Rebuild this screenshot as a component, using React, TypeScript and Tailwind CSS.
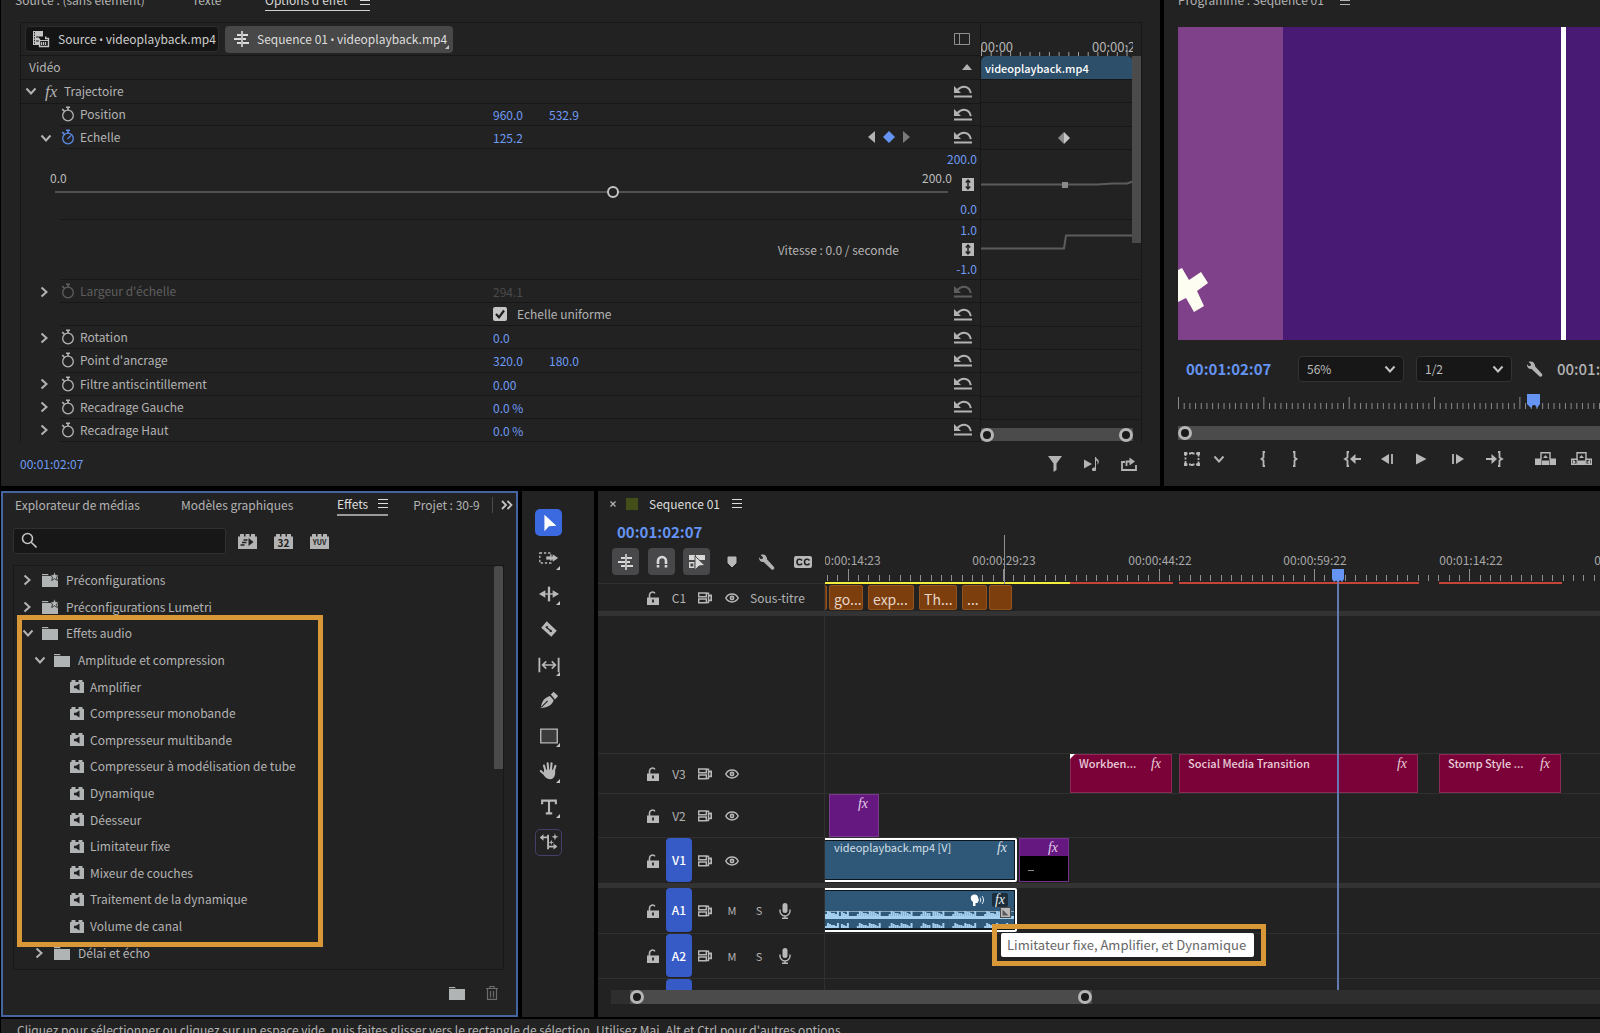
import type { ReactNode } from 'react';
import clsx from 'clsx';

const CHROME = 'text-[#b3b3b3]';

/* ---------- Icons ---------- */

interface IconProps {
  className?: string;
}

function ChevronDown({ className }: IconProps) {
  return (
    <svg viewBox="0 0 12 12" className={clsx('size-3 shrink-0', className)} fill="none" stroke="currentColor" strokeWidth="2">
      <path d="M1.5 3.5 6 8.5l4.5-5" />
    </svg>
  );
}

function ChevronRight({ className }: IconProps) {
  return (
    <svg viewBox="0 0 12 12" className={clsx('size-3 shrink-0', className)} fill="none" stroke="currentColor" strokeWidth="2">
      <path d="M3.5 1.5 8.5 6l-5 4.5" />
    </svg>
  );
}

function MenuLines({ className }: IconProps) {
  return (
    <svg viewBox="0 0 10 9" className={clsx('h-[9px] w-2.5 shrink-0', className)} stroke="currentColor" strokeWidth="1">
      <path d="M0 .5h10M0 4.5h10M0 8.5h10" />
    </svg>
  );
}

function Stopwatch({ active, className }: IconProps & { active?: boolean }) {
  return (
    <svg
      viewBox="0 0 14 16"
      className={clsx('h-4 w-3.5 shrink-0', active && 'text-[#5b8ae8]', className)}
      fill="none"
      stroke="currentColor"
      strokeWidth="1.3"
    >
      <circle cx="7" cy="9.5" r="5.3" />
      <path d="M5 1.2h4M7 1v3M1.2 3.2l2.2 2" strokeWidth="1.6" />
      {active && <path d="M6.5 10 10 6.5" />}
    </svg>
  );
}

function ResetIcon({ className }: IconProps) {
  return (
    <svg viewBox="0 0 18 13" className={clsx('h-[13px] w-[18px] shrink-0', className)}>
      <path d="M0 1v7h7z" fill="currentColor" />
      <path d="M3.5 5C8 0 15.5.8 16.8 8.2" fill="none" stroke="currentColor" strokeWidth="2" />
      <path d="M0 11.5h18" stroke="currentColor" strokeWidth="2" />
    </svg>
  );
}

function ExpandIcon() {
  return (
    <svg viewBox="0 0 12 13" className="h-[13px] w-3">
      <rect width="12" height="13" fill="#b8b8b8" />
      <path d="M6 2v9M3.8 4.4 6 2l2.2 2.4M3.8 8.6 6 11l2.2-2.4" fill="none" stroke="#222" strokeWidth="1.5" />
    </svg>
  );
}

function SourceIcon() {
  return (
    <svg viewBox="0 0 18 18" className="size-[18px] shrink-0" fill="none" stroke="#c4c4c4">
      <path d="M1 1h10v5.5H7V15H1z" fill="#c4c4c4" stroke="none" />
      <path d="M2.5 2v12" stroke="#1a1a1a" strokeWidth="1" strokeDasharray="1.3 1.3" />
      <path d="M4 7h3M4 11h3" stroke="#1a1a1a" />
      <path d="M7.5 8.5v8h9v-8h-2.8v-2" strokeWidth="1.4" />
      <path d="M7 10.5h10M9.5 12v3M11.5 12v3M13.5 12v3" strokeWidth="1.2" />
    </svg>
  );
}

function NestIcon({ className }: IconProps) {
  return (
    <svg viewBox="0 0 18 16" className={clsx('h-4 w-[18px] shrink-0', className)} stroke="currentColor" fill="none" strokeWidth="2">
      <path d="M9 0v16" strokeWidth="1.6" />
      <path d="M4 4h4M1 8h7M4 12h4M10 4h5M10 8h3M10 12h6" />
    </svg>
  );
}

function Wrench({ className }: IconProps) {
  return (
    <svg viewBox="0 0 16 16" className={clsx('size-4 shrink-0', className)} fill="currentColor">
      <path d="M1.6.9 4 3.2l-.4 1.6-1.7.5L0 3.3C-.3 6 1.8 8.4 4.6 8l8 7.4c1.7 1 3.4-.8 2.4-2.4L8 5.2C8.4 2.3 5.3-.7 1.6.9z" />
    </svg>
  );
}

function FolderIcon({ starred }: { starred?: boolean }) {
  return (
    <svg viewBox="0 0 17 14" className="h-3.5 w-[17px] shrink-0 overflow-visible" fill="#b0b4b4">
      <path d="M0 1h6l1 2h9v11H0z" />
      <path d="M0 2.5h7" stroke="#222" strokeWidth=".8" />
      {starred && (
        <path d="m12.5-1.5 1.2 3.2 3.3.2-2.5 2.2.9 3.5-2.9-1.900-2.8 1.900.8-3.500L8 1.900l3.300-.2z" stroke="#222" strokeWidth=".8" />
      )}
    </svg>
  );
}

function AudioEffectIcon() {
  return (
    <svg viewBox="0 0 14 13" className="h-[13px] w-3.5 shrink-0">
      <path d="M0 2h1.5V0h4v2h3V0h4v2H14v11H0z" fill="#b0b4b4" />
      <path d="M9.5 3.5v7L6 8.3H4V5.7h2z" fill="#222" />
    </svg>
  );
}

function Brick({ children }: { children: ReactNode }) {
  return (
    <svg viewBox="0 0 19 15" className="h-[15px] w-[19px]">
      <path d="M0 2.5h2V0h4v2.5h1.5V0h4v2.5H13V0h4v2.5h2V15H0z" fill="#b3b3b3" />
      {children}
    </svg>
  );
}

function LockIcon() {
  return (
    <svg viewBox="0 0 12 14" className="h-3.5 w-3 shrink-0">
      <path d="M2.5 7V4a3 3 0 0 1 5.500-1.600" fill="none" stroke="#b8b8b8" strokeWidth="1.6" />
      <path d="M0 6.5h12V14H0z" fill="#b8b8b8" />
      <path d="M6 8.5v3" stroke="#222" strokeWidth="1.8" />
    </svg>
  );
}

function SyncIcon() {
  return (
    <svg viewBox="0 0 14 12" className="h-3 w-3.5 shrink-0" fill="none" stroke="#b8b8b8" strokeWidth="1.4">
      <path d="M.7 1h7.600v3.700H.7zM.7 7h7.600v3.700H.7zM8.500 1.200h2v9.300h-2" />
      <path d="M10.5 3.5h2.800v4.800h-2.800" strokeWidth="1.8" />
    </svg>
  );
}

function EyeIcon() {
  return (
    <svg viewBox="0 0 14 10" className="h-2.5 w-3.5 shrink-0">
      <path d="M.8 5C3.5-.2 10.5-.2 13.2 5 10.5 10.2 3.5 10.2.8 5z" fill="none" stroke="#b8b8b8" strokeWidth="1.5" />
      <circle cx="7" cy="5" r="2.4" fill="#b8b8b8" />
      <circle cx="7" cy="5" r=".8" fill="#222" />
    </svg>
  );
}

function MicIcon() {
  return (
    <svg viewBox="0 0 12 16" className="h-4 w-3 shrink-0" fill="none" stroke="#b8b8b8" strokeWidth="1.4">
      <rect x="3.5" y="0" width="5" height="10" rx="2.5" fill="#b8b8b8" stroke="none" />
      <path d="M1 6.5V8a5 5 0 0 0 10 0V6.500M6 13v2.500M3 15.300h6" />
    </svg>
  );
}

function CornerMark({ className }: IconProps) {
  return (
    <svg viewBox="0 0 4 4" className={clsx('absolute size-1', className)}>
      <path d="M4 0v4H0z" fill="#c4c4c4" />
    </svg>
  );
}

function Fx({ className }: IconProps) {
  return <i className={clsx('font-["Liberation_Serif",serif] leading-none', className)}>fx</i>;
}

function Bullet() {
  return <span className='font-["Noto_Sans",sans-serif] text-[10px]'> • </span>;
}

function ScrollKnob({ className }: IconProps) {
  return <span className={clsx('size-3.5 shrink-0 rounded-full border-3 border-[#b5b5b5] bg-[#1a1a1a]', className)} />;
}

/* ---------- Effect options ---------- */

interface PropertyRowProps {
  label?: string;
  values?: string[];
  expandable?: boolean;
  open?: boolean;
  keyed?: boolean;
  disabled?: boolean;
  children?: ReactNode;
}

function PropertyRow({ label, values = [], expandable, open, keyed, disabled, children }: PropertyRowProps) {
  return (
    <div className="flex min-h-0 flex-1 items-stretch">
      <div className="flex w-[39px] items-center pl-[17px]">
        {expandable && (open ? <ChevronDown className="ml-0.5" /> : <ChevronRight />)}
      </div>
      <div className={clsx('flex flex-1 items-center border-b border-[#171717] pl-px pr-2', disabled && 'text-[#5e5e5e]')}>
        <div className="flex w-[432px] shrink-0 items-center gap-[5px]">
          {label && (
            <>
              <Stopwatch active={keyed} />
              <span>{label}</span>
            </>
          )}
        </div>
        {children}
        {values.map((value) => (
          <button key={value} className={clsx('mt-0.5 w-14 text-left', disabled ? 'text-[#4a4a4a]' : 'text-[#6f9bf5]')}>
            {value}
          </button>
        ))}
        <div className="ml-auto flex items-center">
          {keyed && (
            <div className="mr-11 flex items-center gap-2">
              <button aria-label="Image clé précédente">
                <svg viewBox="0 0 7 12" className="h-3 w-[7px]">
                  <path d="M7 0v12L0 6z" fill="#b3b3b3" />
                </svg>
              </button>
              <button aria-label="Image clé">
                <svg viewBox="0 0 12 12" className="size-3">
                  <path d="m6 0 6 6-6 6-6-6z" fill="#6594f2" />
                </svg>
              </button>
              <button aria-label="Image clé suivante">
                <svg viewBox="0 0 7 12" className="h-3 w-[7px]">
                  <path d="M0 0v12l7-6z" fill="#7a7a7a" />
                </svg>
              </button>
            </div>
          )}
          <button aria-label="Réinitialiser">
            <ResetIcon />
          </button>
        </div>
      </div>
    </div>
  );
}

function KeyframeArea() {
  const lines = [79, 102, 126, 149, 219, 279, 302, 326, 349, 372, 396, 419];
  const ticks = Array.from({ length: 16 }, (_, i) => i);

  return (
    <div className="relative flex w-[162px] shrink-0 flex-col border-x border-[#171717]">
      <div className="relative h-[33px] w-[152px] overflow-hidden text-[13px] leading-4">
        <span className="absolute -left-1 top-4">:00:00</span>
        <span className="absolute left-[111px] top-4 whitespace-nowrap">00:00:29</span>
        <svg className="absolute bottom-0 h-2.5 w-full" stroke="#a0a0a0">
          {ticks.map((i) => (
            <path key={i} d={`M${i * 9.7 + 0.5} ${i % 15 === 0 ? 0 : 6}V10`} />
          ))}
        </svg>
      </div>
      <div className="flex h-[23px] w-[152px] items-center rounded-t-md bg-[#2d4f6a] pl-1 text-[11px] font-medium text-white">
        videoplayback.mp4
      </div>
      <svg className="w-full flex-1" fill="none">
        {lines.map((y) => (
          <path key={y} d={`M0 ${y - 78.5}h158`} stroke="#171717" />
        ))}
        <path d="M0 105.5h116l16-1h14l6-2" stroke="#5c5c5c" strokeWidth="2" />
        <rect x="81" y="103" width="6" height="6" fill="#8a8a8a" />
        <path d="M0 169.5h83l2-13h67" stroke="#5c5c5c" strokeWidth="2" />
        <path d="m83 53-6 6 6 6z" fill="#8a8a8a" />
        <path d="m83 53 6 6-6 6z" fill="#c4c4c4" />
      </svg>
      <div className="absolute right-0 top-[33px] h-[187px] w-[9px] bg-[#4b4b4b]" />
      <div className="mb-px flex h-[13px] w-[152px] items-center justify-between bg-[#4b4b4b]">
        <ScrollKnob className="-ml-px" />
        <ScrollKnob />
      </div>
    </div>
  );
}

function EffectOptions() {
  return (
    <section className={clsx('flex min-w-0 flex-1 flex-col bg-[#222222] pl-[19px] text-xs leading-5', CHROME)}>
      <div className="-ml-[5px] -mt-2.5 flex h-8 items-start whitespace-nowrap">
        <button className="w-[177px] text-left">Source : (sans élément)</button>
        <button className="w-[73px] text-left">Texte</button>
        <button className="flex items-center gap-3 border-b border-[#d0d0d0] text-[#d8d8d8]">
          Options d'effet
          <MenuLines />
        </button>
      </div>

      <div className="mr-[18px] flex h-[420px] border-l border-t border-[#171717]">
        <div className="flex min-w-0 flex-1 flex-col">
          {/* Clip switcher */}
          <div className="flex h-[33px] shrink-0 items-center gap-1.5 whitespace-nowrap border-b border-[#171717] pl-1 pr-2.5 text-[#cccccc]">
            <button className="flex h-[26px] w-[194px] items-center gap-2 rounded border border-[#2e2e2e] bg-[#141414] pl-1.5">
              <SourceIcon />
              <span>
                Source
                <Bullet />
                videoplayback.mp4
              </span>
            </button>
            <button className="relative flex h-[27px] w-[228px] items-center gap-1.5 rounded bg-[#484848] pl-2 text-[#dddddd]">
              <NestIcon />
              <span>
                Sequence 01
                <Bullet />
                videoplayback.mp4
              </span>
              <CornerMark className="bottom-1 right-1" />
            </button>
            <button className="ml-auto" aria-label="Afficher le montage">
              <svg viewBox="0 0 16 12" className="h-3 w-4" fill="none" stroke="#8f8f8f">
                <path d="M.5.5h15v11H.5zM5.500.5v11" />
              </svg>
            </button>
          </div>

          <div className="flex h-[93px] shrink-0 flex-col">
            <div className="flex flex-1 items-center justify-between border-b border-[#171717] pl-2 pr-2">
              <span>Vidéo</span>
              <svg viewBox="0 0 10 6" className="h-1.5 w-2.5">
                <path d="M0 6 5 0l5 6z" fill="#b3b3b3" />
              </svg>
            </div>
            <div className="flex flex-1 items-center border-b border-[#171717] pl-1 pr-2">
              <ChevronDown />
              <Fx className="ml-2 w-4 text-[17px]" />
              <span className="ml-[3px]">Trajectoire</span>
              <button className="ml-auto" aria-label="Réinitialiser">
                <ResetIcon />
              </button>
            </div>
            <PropertyRow label="Position" values={['960.0', '532.9']} />
            <PropertyRow label="Echelle" values={['125.2']} expandable open keyed />
          </div>

          {/* Scale slider */}
          <div className="flex h-[70px] shrink-0">
            <div className="ml-[29px] mt-[19px] min-w-0 flex-1">
              <div className="flex justify-between text-[#bdbdbd]">
                <span>0.0</span>
                <span>200.0</span>
              </div>
              <input
                type="range"
                aria-label="Echelle"
                min="0"
                max="200"
                step="0.1"
                defaultValue="125.2"
                className="-mt-0.5 block h-3 w-full appearance-none bg-transparent bg-[linear-gradient(#505050,#505050)] bg-[length:99%_2px] bg-center bg-no-repeat [&::-webkit-slider-thumb]:size-3 [&::-webkit-slider-thumb]:appearance-none [&::-webkit-slider-thumb]:rounded-full [&::-webkit-slider-thumb]:border-2 [&::-webkit-slider-thumb]:border-[#c4c4c4] [&::-webkit-slider-thumb]:bg-[#222222]"
              />
            </div>
            <div className="flex w-7 flex-col items-end justify-between whitespace-nowrap pr-[3px] text-[#6f9bf5]">
              <span>200.0</span>
              <button className="mr-[3px]" aria-label="Ajuster l'échelle">
                <ExpandIcon />
              </button>
              <span>0.0</span>
            </div>
          </div>
          <div className="ml-[39px] h-px shrink-0 bg-[#171717]" />
          <div className="flex h-[59px] shrink-0 items-center justify-end">
            <span className="mr-[53px]">Vitesse : 0.0 / seconde</span>
            <div className="flex h-full w-7 flex-col items-end justify-between whitespace-nowrap pr-[3px] text-[#6f9bf5]">
              <span>1.0</span>
              <button className="mr-[3px]" aria-label="Ajuster la vitesse">
                <ExpandIcon />
              </button>
              <span>-1.0</span>
            </div>
          </div>
          <div className="ml-[39px] h-px shrink-0 bg-[#171717]" />

          <div className="flex min-h-0 flex-1 flex-col">
            <PropertyRow label="Largeur d'échelle" values={['294.1']} expandable disabled />
            <PropertyRow>
              <label className="flex items-center gap-2.5">
                <span className="grid size-3.5 place-items-center *:col-start-1 *:row-start-1">
                  <input type="checkbox" defaultChecked className="size-3.5 appearance-none rounded-xs bg-[#c4c4c4]" />
                  <svg viewBox="0 0 12 12" className="pointer-events-none size-3" fill="none" stroke="#1c1c1c" strokeWidth="2.2">
                    <path d="m2 6 3 3.300L10 2.500" />
                  </svg>
                </span>
                Echelle uniforme
              </label>
            </PropertyRow>
            <PropertyRow label="Rotation" values={['0.0']} expandable />
            <PropertyRow label="Point d'ancrage" values={['320.0', '180.0']} />
            <PropertyRow label="Filtre antiscintillement" values={['0.00']} expandable />
            <PropertyRow label="Recadrage Gauche" values={['0.0 %']} expandable />
            <PropertyRow label="Recadrage Haut" values={['0.0 %']} expandable />
          </div>
        </div>
        <KeyframeArea />
      </div>

      <div className="flex flex-1 items-center pr-[23px]">
        <span className="text-[#6f9bf5]">00:01:02:07</span>
        <div className="ml-auto flex items-center gap-5">
          <button aria-label="Filtrer">
            <svg viewBox="0 0 16 16" className="size-4" fill="#b3b3b3">
              <path d="M1 0h14L9.500 7.500V14L6.500 16V7.500z" />
            </svg>
          </button>
          <button aria-label="Lire l'audio">
            <svg viewBox="0 0 18 14" className="h-3.5 w-[18px]" fill="#b3b3b3">
              <path d="M1 2.500 9 7l-8 4.500zM10.500 10.500a2 2 0 1 0 2.500 2V3.500c2 .5 2 2.500 1 4.500 2.500-2 2.500-5-.5-6.500L13 0h-1v10.500z" />
            </svg>
          </button>
          <button aria-label="Exporter">
            <svg viewBox="0 0 16 14" className="h-3.5 w-4" fill="none" stroke="#b3b3b3" strokeWidth="1.8">
              <path d="M4 5H1v8h14V8M5.500 9V4.500H10" />
              <path d="M8.500.5 14 4.500l-5.500 4z" fill="#b3b3b3" stroke="none" />
            </svg>
          </button>
        </div>
      </div>
    </section>
  );
}

/* ---------- Program monitor ---------- */

function ProgramSelect({ label, options, className }: { label: string; options: string[]; className: string }) {
  return (
    <div className={clsx('relative shrink-0', className)}>
      <select
        aria-label={label}
        className="h-[26px] w-full appearance-none rounded border border-[#333333] bg-[#171717] pl-2 text-xs text-[#bdbdbd]"
      >
        {options.map((option) => (
          <option key={option}>{option}</option>
        ))}
      </select>
      <ChevronDown className="pointer-events-none absolute right-2 top-[7px] text-[#c4c4c4]" />
    </div>
  );
}

function TransportButton({ label, className, children }: { label: string; className?: string; children: ReactNode }) {
  return (
    <button aria-label={label} className={clsx('shrink-0', className)}>
      <svg viewBox="0 0 22 16" className="h-4 w-[22px]" fill="none" stroke="#b8b8b8" strokeWidth="1.8">
        {children}
      </svg>
    </button>
  );
}

function ProgramMonitor() {
  const ticks = Array.from({ length: 76 }, (_, i) => i);

  return (
    <section className={clsx('flex w-[436px] shrink-0 flex-col overflow-hidden bg-[#222222] pl-3.5 text-xs leading-5', CHROME)}>
      <div className="-mt-2.5 flex h-[37px] shrink-0 items-start">
        <button className="flex items-center gap-4">
          Programme : Sequence 01
          <MenuLines />
        </button>
      </div>

      <svg viewBox="0 0 422 313" className="h-[313px] w-full shrink-0" preserveAspectRatio="xMinYMin slice">
        <rect width="422" height="313" fill="#481a73" />
        <rect width="105" height="313" fill="#7f4189" />
        <rect x="383" width="5" height="313" fill="#ffffff" />
        <path d="m0 243 4-2 7 12 12-8 7 11-11 8 7 15-10 6-8-14-8 4z" fill="#fdfdf2" />
      </svg>

      <div className="flex h-[57px] shrink-0 items-center whitespace-nowrap pl-2">
        <span className="w-28 shrink-0 text-[15px] font-bold text-[#6594f2]">00:01:02:07</span>
        <ProgramSelect label="Zoom" options={['56%', '100%']} className="w-[106px]" />
        <ProgramSelect label="Résolution de lecture" options={['1/2', '1/4']} className="ml-3 w-24" />
        <button className="ml-[15px]" aria-label="Réglages">
          <Wrench />
        </button>
        <span className="ml-3.5 text-[15px] font-medium">00:01:</span>
      </div>

      <svg className="h-[18px] w-full shrink-0 overflow-visible" stroke="#8a8a8a">
        {ticks.map((i) => (
          <path key={i} d={`M${i * 5.69 + 0.5} ${i % 15 === 0 ? 0 : 6}V12`} />
        ))}
        <path d="M349-3h13V7l-3 4-2-3h-2l-2 3-4-4z" fill="#6594f2" stroke="none" />
      </svg>
      <div className="mt-[11px] flex h-3.5 shrink-0 items-center bg-[#4b4b4b]">
        <ScrollKnob />
      </div>

      <div className="flex flex-1 items-center pb-2">
        <TransportButton label="Recadrer" className="ml-[3px]">
          <path d="M4.500 2.500h13v11h-13z" strokeDasharray="2 1.500" />
          <path d="M3 1h3v3H3zM16 1h3v3h-3zM3 12h3v3H3zM16 12h3v3h-3zM10 1h2v2h-2zM10 13h2v2h-2z" fill="#b8b8b8" stroke="none" />
        </TransportButton>
        <button className="ml-2.5" aria-label="Plus d'options">
          <ChevronDown />
        </button>
        <TransportButton label="Point d'entrée" className="ml-[27px]">
          <path d="M13 1h-1.500v5.500L9.500 8l2 1.500V15H13" />
        </TransportButton>
        <TransportButton label="Point de sortie" className="ml-2.5">
          <path d="M9 1h1.500v5.500l2 1.500-2 1.500V15H9" />
        </TransportButton>
        <TransportButton label="Aller au point d'entrée" className="ml-9">
          <path d="M7 1H5.500v5.500L3 8l2.500 1.500V15H7M10 8h9" />
          <path d="M13.500 3v10L8 8z" fill="#b8b8b8" stroke="none" />
        </TransportButton>
        <TransportButton label="Image précédente" className="ml-3">
          <path d="M13 3v10L5 8z" fill="#b8b8b8" stroke="none" />
          <path d="M16 3v10" />
        </TransportButton>
        <TransportButton label="Lecture" className="ml-3">
          <path d="M6 2.500v11L16.500 8z" fill="#b8b8b8" stroke="none" />
        </TransportButton>
        <TransportButton label="Image suivante" className="ml-[15px]">
          <path d="M9 3v10l8-5z" fill="#b8b8b8" stroke="none" />
          <path d="M6 3v10" />
        </TransportButton>
        <TransportButton label="Aller au point de sortie" className="ml-3.5">
          <path d="M15 1h1.500v5.500L19 8l-2.500 1.500V15H15M3 8h8" />
          <path d="M8.500 3v10L14 8z" fill="#b8b8b8" stroke="none" />
        </TransportButton>
        <TransportButton label="Prélever" className="ml-[30px]">
          <path d="M0 7.500h6.500V14H0zM14.500 7.500H21V14h-6.500zM7 9.500h7V14H7z" fill="#b8b8b8" stroke="none" />
          <path d="M6 8V1.700h9V8" strokeWidth="1.400" />
          <path d="m10.500 4 2.500 3H8z" fill="#b8b8b8" stroke="none" />
        </TransportButton>
        <TransportButton label="Extraire" className="ml-3.5">
          <path d="M.7 8.200h5.500v5.100H.7zM14.800 8.200h5.500v5.100h-5.500z" strokeWidth="1.400" />
          <path d="M7 9.500h7V14H7zM2 8.500l3 2.500-3 2.500zM19 8.500 16 11l3 2.500z" fill="#b8b8b8" stroke="none" />
          <path d="M6 8V1.700h9V8" strokeWidth="1.400" />
          <path d="m10.500 4 2.500 3H8z" fill="#b8b8b8" stroke="none" />
        </TransportButton>
      </div>
    </section>
  );
}

/* ---------- Effects browser ---------- */

const audioEffects = [
  'Amplifier',
  'Compresseur monobande',
  'Compresseur multibande',
  'Compresseur à modélisation de tube',
  'Dynamique',
  'Déesseur',
  'Limitateur fixe',
  'Mixeur de couches',
  'Traitement de la dynamique',
  'Volume de canal',
];

interface FolderRowProps {
  label: string;
  nested?: boolean;
  open?: boolean;
  starred?: boolean;
}

function FolderRow({ label, nested, open, starred }: FolderRowProps) {
  return (
    <li className={clsx('flex flex-1 items-center', nested ? 'pl-[19px]' : 'pl-[7px]')}>
      {open ? <ChevronDown className="ml-px" /> : <ChevronRight />}
      <span className={clsx('mr-[7px]', open ? 'ml-2' : 'ml-[9px]')}>
        <FolderIcon starred={starred} />
      </span>
      {label}
    </li>
  );
}

function EffectsPanel() {
  return (
    <section className={clsx('flex w-[517px] shrink-0 flex-col border-2 border-[#45659f] bg-[#222222] text-xs leading-5', CHROME)}>
      <div className="flex h-[23px] items-center whitespace-nowrap pl-3">
        <button className="w-[166px] text-left">Explorateur de médias</button>
        <button className="w-[156px] text-left">Modèles graphiques</button>
        <button className="flex h-[23px] items-center gap-2.5 border-b-2 border-[#9a9a9a] text-[#dddddd]">
          Effets
          <MenuLines />
        </button>
        <button className="ml-[25px]">Projet : 30-9</button>
        <div className="ml-3 mr-2 h-4 w-px bg-[#4b4b4b]" />
        <button aria-label="Plus de panneaux">
          <svg viewBox="0 0 12 10" className="h-2.5 w-3" fill="none" stroke="#c4c4c4" strokeWidth="1.8">
            <path d="m1 1 4 4-4 4M6.500 1l4 4-4 4" />
          </svg>
        </button>
      </div>

      <div className="mt-3 flex items-center pl-2.5">
        <label className="relative">
          <svg viewBox="0 0 16 16" className="absolute left-2 top-1 size-4" fill="none" stroke="#c4c4c4" strokeWidth="1.6">
            <circle cx="6.5" cy="6.5" r="5" />
            <path d="m10.200 10.200 5.300 5.300" />
          </svg>
          <input
            type="search"
            aria-label="Rechercher un effet"
            className="block h-[26px] w-[213px] rounded-xs border border-[#303030] bg-[#171717] pl-7 pr-2 outline-none"
          />
        </label>
        <div className="ml-3 flex gap-[17px]">
          <button aria-label="Effets accélérés">
            <Brick>
              <path d="M10.500 4v8l5-4z" fill="#222" />
              <path d="M5.500 6h4M4 8.500h4.500M2.500 11h4" stroke="#222" strokeWidth="1.3" />
            </Brick>
          </button>
          <button aria-label="Effets 32 bits">
            <Brick>
              <text x="9.5" y="12.5" textAnchor="middle" fontSize="10" fontWeight="700" fill="#222">
                32
              </text>
            </Brick>
          </button>
          <button aria-label="Effets YUV">
            <Brick>
              <text x="9.5" y="11" textAnchor="middle" fontSize="7" fontWeight="700" fill="#222">
                YUV
              </text>
            </Brick>
          </button>
        </div>
      </div>

      <div className="relative ml-2.5 mr-3 mt-[11px] flex h-[405px] flex-col border border-[#181818]">
        <ul className="flex h-[400px] flex-col pt-px">
          <FolderRow label="Préconfigurations" starred />
          <FolderRow label="Préconfigurations Lumetri" starred />
          <FolderRow label="Effets audio" open />
          <FolderRow label="Amplitude et compression" open nested />
          {audioEffects.map((effect) => (
            <li key={effect} className="flex flex-1 items-center gap-1.5 pl-14">
              <AudioEffectIcon />
              {effect}
            </li>
          ))}
          <FolderRow label="Délai et écho" nested />
        </ul>
        <div className="absolute right-0 top-0 h-[203px] w-[9px] rounded-t-xs bg-[#4b4b4b]" />
        {/* Highlight around the audio effects */}
        <div className="pointer-events-none absolute left-[3px] top-[49px] h-[332px] w-[306px] border-5 border-[#d99838]" />
      </div>

      <div className="flex flex-1 items-center justify-end gap-5 pr-[18px]">
        <button aria-label="Nouveau chutier">
          <FolderIcon />
        </button>
        <button aria-label="Supprimer">
          <svg viewBox="0 0 12 14" className="h-3.5 w-3" fill="none" stroke="#6b6b6b" strokeWidth="1.2">
            <path d="M0 2.500h12M4 2.500v-2h4v2M1.500 3v10.400h9V3M4.500 5v6.500M7.500 5v6.500" />
          </svg>
        </button>
      </div>
    </section>
  );
}

/* ---------- Tools ---------- */

interface Tool {
  name: string;
  icon: ReactNode;
  menu?: boolean;
}

const tools: Tool[] = [
  { name: 'Sélection', icon: <path d="M7 3v18l5-5.500 8-.5z" fill="#ffffff" stroke="none" /> },
  {
    name: 'Sélection de piste',
    menu: true,
    icon: (
      <>
        <path d="M2 6.500h12v11H2z" strokeDasharray="2.500 2" strokeWidth="1.500" />
        <path d="M9 12h8" strokeWidth="3.5" />
        <path d="M16 8v8l6-4z" fill="#b8b8b8" stroke="none" />
      </>
    ),
  },
  {
    name: 'Propagation',
    menu: true,
    icon: (
      <>
        <path d="M12 4v16" strokeWidth="2.5" />
        <path d="M4 12h16" strokeWidth="1.500" />
        <path d="M8 8v8l-7-4zM16 8v8l7-4z" fill="#b8b8b8" stroke="none" />
      </>
    ),
  },
  {
    name: 'Cutter',
    icon: (
      <>
        <path d="m9.500 3.500 11 10.500-6 6.500-11-10z" fill="#b8b8b8" stroke="none" />
        <path d="m8.500 9.500 6.500 5.500M10.500 9l-1.500 2M14.500 13l-1.500 2" stroke="#222" strokeWidth="1.500" />
      </>
    ),
  },
  {
    name: 'Déplacer dessous',
    menu: true,
    icon: (
      <>
        <path d="M1.500 4v16M22.500 4v16" strokeWidth="2" />
        <path d="M5 12h14M9 8l-4 4 4 4M15 8l4 4-4 4" strokeWidth="1.800" />
      </>
    ),
  },
  {
    name: 'Plume',
    icon: (
      <>
        <path d="M3 21C4 13 7 9.500 13 7.500l4 4.500C16 17 11 20 3 21zM14 6l3-3 5 4.500-3.500 4z" fill="#b8b8b8" stroke="none" />
        <path d="m3.500 20 7-7" stroke="#222" strokeWidth="1.200" />
      </>
    ),
  },
  { name: 'Rectangle', menu: true, icon: <path d="M3 4.500h18v15H3z" fill="#3c3c3c" strokeWidth="1.500" /> },
  {
    name: 'Main',
    menu: true,
    icon: (
      <>
        <path d="M6.500 11c3-1 9.500-1 12 0 1 4-.5 10-5 10-3 0-5-1-7-4z" fill="#b8b8b8" stroke="none" />
        <path d="M8.500 13 6.500 6M11.300 12l-.8-8.500M14 12l.8-8.500M16.800 13l2.200-6.500M8.500 17l-5.500-5" strokeWidth="2.300" strokeLinecap="round" />
      </>
    ),
  },
  { name: 'Texte', menu: true, icon: <path d="M4.500 9V5h15v4M12 5v14M8.500 19h7" strokeWidth="2.300" /> },
  {
    name: 'Remix',
    icon: (
      <>
        <path d="M11 4v16M3 7h8M11 17h9" strokeWidth="2" />
        <path d="M6 3.500 2 7l4 3.500zM17 13.500l4 3.500-4 3.500z" fill="#b8b8b8" stroke="none" />
        <path d="m18.500 2.500.9 3 3 .9-3 .9-.9 3-.9-3-3-.9 3-.9zM14.500 9.500l.7 2.300 2.300.7-2.300.7-.7 2.300-.7-2.300-2.300-.7 2.300-.7z" fill="#b8b8b8" stroke="none" />
      </>
    ),
  },
];

function ToolBar() {
  return (
    <nav className="w-[72px] shrink-0 bg-[#222222] pr-[19px] pt-[18px]">
      <div className="flex h-[347px] flex-col items-center justify-between">
        {tools.map((tool, index) => (
          <button
            key={tool.name}
            aria-label={tool.name}
            className={clsx(
              'relative grid h-[27px] w-[27px] place-items-center rounded-[5px]',
              index === 0 && 'bg-[#3b69e0]',
              index === tools.length - 1 && 'border border-[#463f6c]',
            )}
          >
            <svg viewBox="0 0 24 24" className="size-[22px]" fill="none" stroke="#b8b8b8">
              {tool.icon}
            </svg>
            {tool.menu && <CornerMark className="bottom-0.5 right-0.5" />}
          </button>
        ))}
      </div>
    </nav>
  );
}

/* ---------- Timeline ---------- */

const TICK = 10.36;

const captions = [
  { start: -4, width: 6, text: '' },
  { start: 4, width: 34, text: 'go...' },
  { start: 43, width: 46, text: 'exp...' },
  { start: 94, width: 38, text: 'Th...' },
  { start: 137, width: 25, text: '...' },
  { start: 164, width: 23, text: '' },
];

const titles = [
  { start: 245, width: 102, text: 'Workben...' },
  { start: 354, width: 239, text: 'Social Media Transition' },
  { start: 614, width: 122, text: 'Stomp Style ...' },
];

const renderBars = [
  { start: 0, width: 245, color: 'bg-[#f4ee3e]' },
  { start: 245, width: 103, color: 'bg-[#c4443a]' },
  { start: 354, width: 240, color: 'bg-[#c4443a]' },
  { start: 614, width: 123, color: 'bg-[#c4443a]' },
];

const rulerLabels = ['00:00:14:23', '00:00:29:23', '00:00:44:22', '00:00:59:22', '00:01:14:22', '00:01:29:21'];

function Ruler() {
  const ticks = Array.from({ length: 76 }, (_, i) => i);

  return (
    <div className="relative min-w-0 flex-1 overflow-hidden">
      {rulerLabels.map((label, i) => (
        <span
          key={label}
          className="absolute top-[34px] w-20 text-center text-xs leading-5 text-[#a8a8a8]"
          style={{ left: Math.round(i * 15 * TICK - 16) }}
        >
          {label}
        </span>
      ))}
      <svg className="absolute bottom-[3px] h-3 w-full" stroke="#8f8f8f">
        {ticks.map((i) => (
          <path key={i} d={`M${Math.round(i * TICK + 2) + 0.5} ${(i - 2) % 15 === 0 ? 0 : 6}V12`} />
        ))}
      </svg>
      {renderBars.map((bar) => (
        <div key={bar.start} className={clsx('absolute bottom-0 h-0.5', bar.color)} style={{ left: bar.start, width: bar.width }} />
      ))}
      <div className="absolute bottom-0 left-[179px] top-[19px] w-px bg-[#8f8f8f]" />
    </div>
  );
}

interface TrackProps {
  name: string;
  className: string;
  audio?: boolean;
  targeted?: boolean;
  title?: string;
  children?: ReactNode;
}

function Track({ name, className, audio, targeted, title, children }: TrackProps) {
  return (
    <div className={clsx('flex shrink-0', className)}>
      <div className="flex w-[227px] shrink-0 items-center border-r border-[#303030] pl-[46px] text-xs">
        <button className="grid w-[18px] place-items-center" aria-label="Verrouiller">
          <LockIcon />
        </button>
        <button
          className={clsx(
            'ml-1 w-[26px] self-stretch text-center',
            targeted && 'mb-px rounded bg-[#365bc6] font-medium text-white',
          )}
        >
          {name}
        </button>
        <button className="ml-1 grid w-[18px] place-items-center" aria-label="Synchroniser">
          <SyncIcon />
        </button>
        {audio ? (
          <>
            <button className="ml-[9px] w-[18px] text-center text-[11px]">M</button>
            <button className="ml-[9px] w-[18px] text-center text-[11px]">S</button>
            <button className="ml-2 grid w-[18px] place-items-center" aria-label="Voix off">
              <MicIcon />
            </button>
          </>
        ) : (
          <button className="ml-[9px] grid w-[18px] place-items-center" aria-label="Afficher la piste">
            <EyeIcon />
          </button>
        )}
        {title && <span className="ml-[9px]">{title}</span>}
      </div>
      <div className="relative min-w-0 flex-1 overflow-hidden">{children}</div>
    </div>
  );
}

function Waveform() {
  const bars = Array.from({ length: 95 }, (_, i) => {
    const gap = i % 16 > 11 || i % 23 === 7;
    return gap ? 0 : 2 + ((i * 7 + (i >> 2) * 5) % 4);
  });

  return (
    <svg viewBox="0 0 190 24" className="absolute bottom-0 left-0 h-6 w-[189px]" preserveAspectRatio="none">
      <path d="M0 5.500h190" stroke="#8ba6b9" strokeWidth="1" />
      <path d="M0 11.500h190" stroke="#a5cfef" strokeWidth="3" />
      {bars.map((h, i) => (
        <g key={i} fill="#a5cfef">
          <rect x={i * 2} y={10 - h} width="2" height={h} />
          <rect x={i * 2} y={22 - h} width="2" height={h} />
        </g>
      ))}
      <path d="M0 22.500h190" stroke="#10202c" />
    </svg>
  );
}

function Timeline() {
  return (
    <section className={clsx('relative flex min-w-0 flex-1 flex-col bg-[#222222]', CHROME)}>
      <div className="flex h-[25px] shrink-0 items-center pl-3 text-xs leading-5 text-[#dddddd]">
        <button aria-label="Fermer">
          <svg viewBox="0 0 6 6" className="size-1.5" stroke="#b8b8b8" strokeWidth="1.2">
            <path d="m.5.5 5 5M5.500.5l-5 5" />
          </svg>
        </button>
        <span className="ml-2.5 size-3 bg-[#434f18]" />
        <span className="ml-[11px]">Sequence 01</span>
        <MenuLines className="ml-3" />
      </div>

      <div className="flex h-[68px] shrink-0">
        <div className="flex w-[227px] shrink-0 flex-col border-b border-[#303030] pl-3.5">
          <span className="mt-1.5 pl-[5px] text-[15px] font-bold leading-5 text-[#6594f2]">00:01:02:07</span>
          <div className="mt-1.5 flex items-center">
            <button className="grid size-[27px] place-items-center rounded bg-[#48484a]" aria-label="Imbriquer">
              <NestIcon className="text-[#d8d8d8]" />
            </button>
            <button className="ml-[9px] grid size-[27px] place-items-center rounded bg-[#48484a]" aria-label="Magnétisme">
              <svg viewBox="0 0 12 13" className="h-[13px] w-3" fill="none" stroke="#d8d8d8" strokeWidth="2.6">
                <path d="M2 12.500V6a4 4 0 0 1 8 0v6.500" />
                <path d="M0 9.500h4M8 9.500h4" stroke="#48484a" strokeWidth="1" />
              </svg>
            </button>
            <button className="ml-2 grid size-[27px] place-items-center rounded bg-[#48484a]" aria-label="Sélection liée">
              <svg viewBox="0 0 18 16" className="h-4 w-[18px]" fill="#d8d8d8">
                <path d="M1 1h6v5H1zM8 1h9v5H8z" />
                <path d="M1.700 8.700H6v4.600H1.700z" fill="none" stroke="#d8d8d8" strokeWidth="1.400" />
                <path d="M7 2v14l4-4 6-.5z" stroke="#48484a" />
              </svg>
            </button>
            <button className="ml-[17px]" aria-label="Marqueur">
              <svg viewBox="0 0 10 12" className="h-3 w-2.5">
                <path d="M1 1h8v6l-4 4-4-4z" fill="#b8b8b8" stroke="#b8b8b8" strokeLinejoin="round" />
              </svg>
            </button>
            <button className="ml-[22px]" aria-label="Réglages de la timeline">
              <Wrench />
            </button>
            <button className="ml-[19px]" aria-label="Sous-titres">
              <svg viewBox="0 0 18 12" className="h-3 w-[18px]">
                <rect width="18" height="12" rx="2" fill="#b8b8b8" />
                <path d="M8 4.500C7 2.800 3 2.500 3 6s4 3.200 5 1.500M15.500 4.500c-1-1.700-5-2-5 1.500s4 3.200 5 1.500" fill="none" stroke="#222" strokeWidth="1.600" />
              </svg>
            </button>
          </div>
        </div>
        <Ruler />
      </div>

      {/* Subtitle track */}
      <Track name="C1" title="Sous-titre" className="h-[27px]">
        {captions.map((caption) => (
          <div
            key={caption.start}
            className="absolute inset-y-0 my-px overflow-hidden rounded-xs border border-[#93531f] bg-[#7d3e0e] pl-1 text-sm leading-[26px] text-[#e6d6c8]"
            style={{ left: caption.start, width: caption.width }}
          >
            {caption.text}
          </div>
        ))}
      </Track>
      <div className="h-[5px] shrink-0 bg-[#333333]" />
      <div className="min-h-0 w-[227px] flex-1 border-r border-[#303030]" />

      <Track name="V3" className="h-10 border-t border-[#303030]">
        {titles.map((clip, i) => (
          <div
            key={clip.start}
            className="absolute inset-y-0 flex items-start justify-between border border-[#8c2a57] bg-[#7a0238] pl-2 pr-2.5 text-[11px] leading-4 text-[#e8ccd8]"
            style={{ left: clip.start, width: clip.width }}
          >
            <span className="font-medium">{clip.text}</span>
            <Fx className="mt-0.5 text-sm" />
            {i === 0 && (
              <svg viewBox="0 0 5 5" className="absolute -left-px -top-px size-[5px]">
                <path d="M0 0h5L0 5z" fill="#ffffff" />
              </svg>
            )}
          </div>
        ))}
      </Track>
      <Track name="V2" className="h-11 border-t border-[#303030]">
        <div className="absolute inset-y-0 left-1 flex w-[50px] items-start justify-end border border-[#7a3a90] bg-[#65187f] pr-2.5 text-[#e3cdea]">
          <Fx className="mt-0.5 text-sm" />
        </div>
      </Track>
      <Track name="V1" targeted className="h-[46px] border-t border-[#303030]">
        <div className="absolute -left-1 bottom-px top-0 flex w-[196px] items-start justify-between rounded-xs border-2 border-white bg-[#2f5777] pl-[11px] pr-2 text-[11px] leading-[14px] text-[#d5e0e8] inset-ring inset-ring-[#0c151c]">
          <span>videoplayback.mp4 [V]</span>
          <Fx className="mt-px text-sm" />
        </div>
        <div className="absolute bottom-px left-[194px] top-0 flex w-[50px] flex-col border border-[#74308c] bg-[#65187f] text-[#e3cdea]">
          <div className="flex h-[17px] items-center justify-end pr-2.5">
            <Fx className="text-sm" />
          </div>
          <div className="flex-1 bg-black pl-2 pt-3.5">
            <div className="h-px w-1.5 bg-[#8a8a8a]" />
          </div>
        </div>
      </Track>
      <div className="h-[5px] shrink-0 bg-[#333333]" />
      <Track name="A1" audio targeted className="h-[45px]">
        <div className="absolute -left-1 bottom-px top-0 w-[196px] rounded-xs border-2 border-white bg-[#2f5777] inset-ring inset-ring-[#0c151c]">
          <div className="absolute inset-y-0 left-0.5 right-0">
            <Waveform />
          </div>
          <svg viewBox="0 0 14 12" className="absolute right-[31px] top-1 h-3 w-3.5" fill="none" stroke="#e6eef4">
            <path d="M1 2.500C3-.5 8 0 8 3.500L9 6 7.500 9H5.500v3H3V8C.5 6.500.5 4 1 2.500z" fill="#ffffff" stroke="none" />
            <path d="M10 3.500c1 1.500 1 3.500 0 5M12 2c2 2.500 2 5.500 0 8" />
          </svg>
          <div className="absolute right-[7px] top-[3px] grid h-3.5 w-4 place-items-center rounded-xs bg-[#1b2d3b] text-[#e6eef4]">
            <Fx className="text-sm" />
          </div>
          <svg viewBox="0 0 11 11" className="absolute right-1 top-[17px] size-[11px]">
            <rect x=".5" y=".5" width="10" height="10" fill="#b8b8b8" stroke="#4a4a4a" />
            <path d="M2.500 2.500v6h6z" fill="#5a5a5a" />
          </svg>
        </div>
      </Track>
      <Track name="A2" audio targeted className="h-[45px] border-t border-[#303030]" />
      <div className="flex h-3 shrink-0 border-t border-[#303030]">
        <div className="w-[227px] border-r border-[#303030] pl-[68px]">
          <div className="h-full w-[26px] rounded-t bg-[#365bc6]" />
        </div>
      </div>

      {/* Zoom scroll bar */}
      <div className="ml-[13px] flex h-3.5 shrink-0 items-center bg-[#2e2e2e]">
        <div className="ml-[19px] flex w-[462px] justify-between bg-[#4b4b4b]">
          <ScrollKnob />
          <ScrollKnob />
        </div>
      </div>
      <div className="h-[13px] shrink-0" />

      {/* Playhead */}
      <div className="pointer-events-none absolute bottom-[27px] left-[734px] top-[78px] flex w-3 flex-col items-center">
        <svg viewBox="0 0 12 14" className="h-3.5 w-3 shrink-0">
          <path d="M0 0h12v10l-2 3-2-2-2 3-2-3-2 2-2-3z" fill="#6594f2" />
        </svg>
        <div className="w-0.5 flex-1 bg-[#6478b4]" />
      </div>

      {/* Tooltip on the audio clip */}
      <div className="absolute bottom-[51px] left-[394px] border-5 border-[#d99838] py-1 pl-1 pr-[7px]">
        <div role="tooltip" className="whitespace-nowrap rounded-xs bg-white pl-1.5 pr-2 text-[13px] leading-6 text-[#666666]">
          Limitateur fixe, Amplifier, et Dynamique
        </div>
      </div>
    </section>
  );
}

export default function App() {
  return (
    <div className='flex h-screen w-full flex-col overflow-hidden bg-black pl-px font-["Noto_Sans_CJK_SC","Noto_Sans",sans-serif]'>
      <div className="flex h-[486px] shrink-0 gap-1">
        <EffectOptions />
        <ProgramMonitor />
      </div>
      <div className="mt-[5px] flex min-h-0 flex-1 gap-1">
        <EffectsPanel />
        <ToolBar />
        <Timeline />
      </div>
      <footer className={clsx('mt-0.5 h-3.5 shrink-0 overflow-hidden bg-[#222222] pl-4 text-xs leading-[22px]', CHROME)}>
        Cliquez pour sélectionner ou cliquez sur un espace vide, puis faites glisser vers le rectangle de sélection. Utilisez Maj, Alt et
        Ctrl pour d'autres options.
      </footer>
    </div>
  );
}
